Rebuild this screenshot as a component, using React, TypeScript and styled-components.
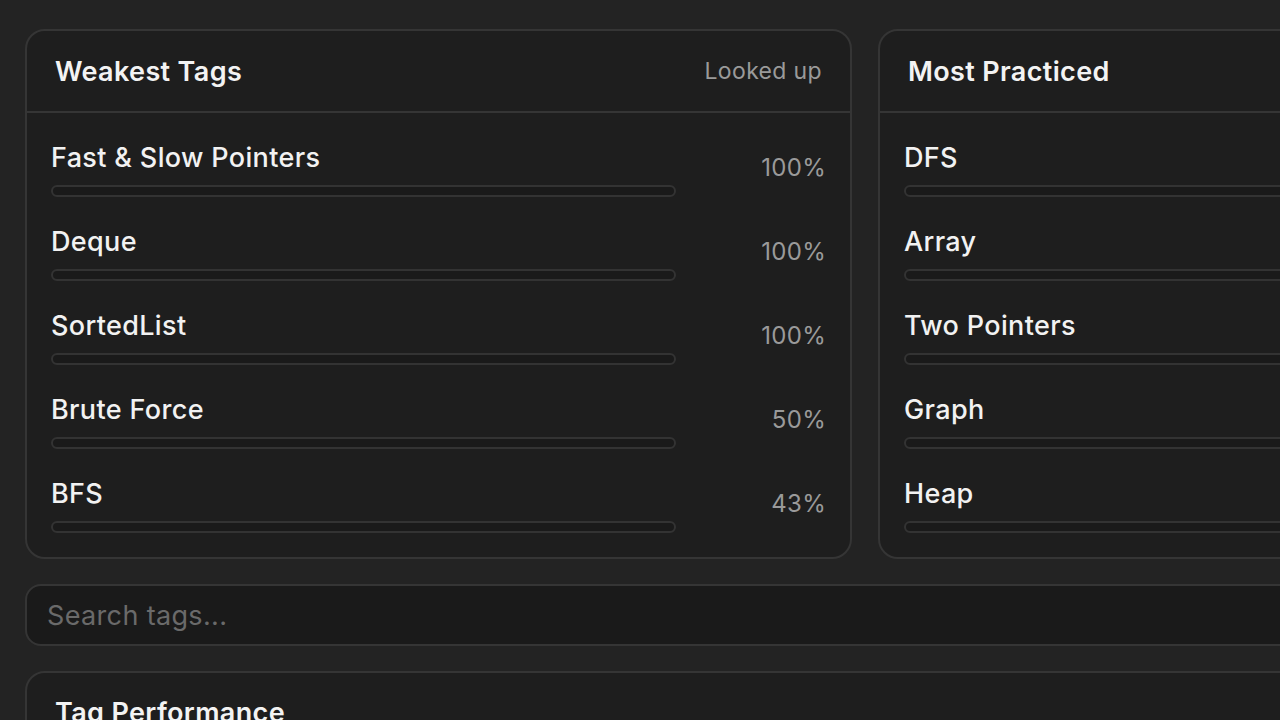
import styled, { createGlobalStyle } from 'styled-components'

const GlobalStyle = createGlobalStyle`
  html, body {
    margin: 0;
    padding: 0;
    background: #232323;
    overflow: hidden;
  }

  body {
    font-family: Inter, 'Noto Sans', 'Liberation Sans', sans-serif;
    color: #f2f2f2;
    -webkit-font-smoothing: antialiased;
  }
`

const Page = styled.div`
  width: 1679px;
  padding: 29px 0 0 25px;
  display: flex;
  flex-direction: column;
  gap: 25px;
`

const CardGrid = styled.div`
  display: grid;
  grid-template-columns: 827px 827px;
  gap: 26px;
`

const Card = styled.section`
  background: #1e1e1e;
  border: 2px solid #353535;
  border-radius: 20px;
  overflow: hidden;
`

const CardHeader = styled.header`
  height: 80px;
  padding: 0 28px 0 28px;
  display: flex;
  align-items: center;
  justify-content: space-between;
  border-bottom: 2px solid #353535;

  .title {
    font-size: 27px;
    font-weight: 600;
    letter-spacing: 0.35px;
    color: #f3f3f3;
  }

  .hint {
    font-size: 23px;
    letter-spacing: 0.35px;
    color: #9a9a9a;
  }
`

const CardBody = styled.div`
  padding: 29px 24px 24px 24px;
  display: flex;
  flex-direction: column;
  gap: 29px;
`

const Row = styled.div`
  display: grid;
  grid-template-columns: 625px 1fr;
  align-items: center;

  .name {
    font-size: 27px;
    line-height: 32px;
    font-weight: 500;
    letter-spacing: 0.35px;
    color: #f2f2f2;
  }

  .value {
    font-size: 24px;
    letter-spacing: 0.3px;
    color: #9a9a9a;
    text-align: right;
    margin-bottom: 4px;
  }
`

const Track = styled.div`
  margin-top: 11px;
  height: 12px;
  box-sizing: border-box;
  border: 2px solid #333;
  border-radius: 6px;
  background: #1a1a1a;
  overflow: hidden;
`

const Fill = styled.div<{ $color: string }>`
  height: 100%;
  background: ${p => p.$color};
`

const SearchInput = styled.input`
  box-sizing: border-box;
  width: 100%;
  height: 62px;
  padding: 0 20px;
  border: 2px solid #353535;
  border-radius: 16px;
  background: #1a1a1a;
  color: #f2f2f2;
  font-family: inherit;
  font-size: 27px;
  letter-spacing: 0.35px;
  outline: none;

  &::placeholder {
    color: #6a6a6a;
  }
`

const PerformanceCard = styled(Card)`
  padding: 23px 28px;
  min-height: 200px;

  h2 {
    margin: 0;
    font-size: 27px;
    font-weight: 600;
    letter-spacing: 0.35px;
    color: #f3f3f3;
  }
`

type Stat = { name: string; value?: string }

const weakest: Stat[] = [
  { name: 'Fast & Slow Pointers', value: '100%' },
  { name: 'Deque', value: '100%' },
  { name: 'SortedList', value: '100%' },
  { name: 'Brute Force', value: '50%' },
  { name: 'BFS', value: '43%' },
]

const practiced: Stat[] = [
  { name: 'DFS' },
  { name: 'Array' },
  { name: 'Two Pointers' },
  { name: 'Graph' },
  { name: 'Heap' },
]

const StatCard: React.FC<{ title: string; hint?: string; items: Stat[] }> = ({ title, hint, items }) => (
  <Card>
    <CardHeader>
      <span className="title">{title}</span>
      {hint && <span className="hint">{hint}</span>}
    </CardHeader>
    <CardBody>
      {items.map(item => (
        <Row key={item.name}>
          <div>
            <div className="name">{item.name}</div>
            <Track>
              <Fill $color="transparent" style={{ width: '0%' }} />
            </Track>
          </div>
          {item.value && <div className="value">{item.value}</div>}
        </Row>
      ))}
    </CardBody>
  </Card>
)

export default function App() {
  return (
    <>
      <GlobalStyle />
      <Page>
        <CardGrid>
          <StatCard title="Weakest Tags" hint="Looked up" items={weakest} />
          <StatCard title="Most Practiced" items={practiced} />
        </CardGrid>
        <SearchInput placeholder="Search tags..." />
        <PerformanceCard>
          <h2>Tag Performance</h2>
        </PerformanceCard>
      </Page>
    </>
  )
}
